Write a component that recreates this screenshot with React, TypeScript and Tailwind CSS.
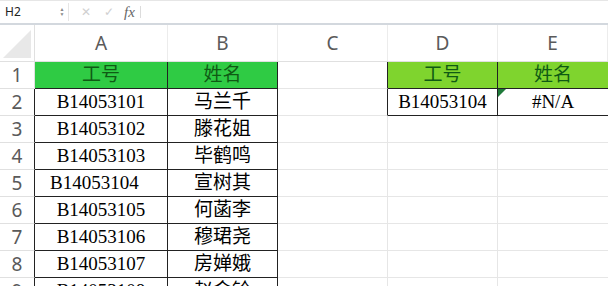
import React from "react";

const cols = ["A", "B", "C", "D", "E"];
const widths = [133, 110, 110, 110, 110];

const data: [string, string][] = [
  ["B14053101", "马兰千"],
  ["B14053102", "滕花姐"],
  ["B14053103", "毕鹤鸣"],
  ["B14053104", "宣树其"],
  ["B14053105", "何菡李"],
  ["B14053106", "穆珺尧"],
  ["B14053107", "房婵娥"],
  ["B14053108", "赵金铃"],
];

const serif = { fontFamily: '"Liberation Serif", "Noto Sans CJK SC", serif' };

export default function App() {
  const rows = [1, 2, 3, 4, 5, 6, 7, 8, 9];
  return (
    <div className="w-[608px] h-[286px] overflow-hidden bg-white" style={{ fontFamily: '"Noto Sans", "Liberation Sans", sans-serif' }}>
      {/* formula bar */}
      <div className="h-[25px] flex items-center border-t border-[#e6e6e6] border-b-[2px] border-b-[#d3d8de] bg-white">
        <div className="w-[58px] pl-[5px] text-[12px] text-[#222] leading-none">H2</div>
        <div className="w-[8px] flex flex-col items-center text-[5px] leading-[5px] text-[#888]">
          <span>▲</span>
          <span>▼</span>
        </div>
        <div className="w-px h-[18px] bg-[#e6e6e6] ml-[2px]" />
        <div className="w-[24px] text-center text-[#d0d0d0] text-[12px] ml-[5px]">✕</div>
        <div className="w-[22px] text-center text-[#d0d0d0] text-[12px]">✓</div>
        <div className="ml-[4px] text-[15px] italic text-[#666]" style={{ fontFamily: '"Liberation Serif", serif' }}>
          fx
        </div>
        <div className="w-px h-[12px] bg-[#dcdcdc] ml-[5px]" />
      </div>
      {/* column headers */}
      <div className="flex h-[37px] border-b border-[#e0e0e0]">
        <div className="w-[35px] h-full relative border-r border-[#e0e0e0] overflow-hidden">
          <div className="absolute right-[3px] bottom-[3px] w-0 h-0 border-l-[28px] border-l-transparent border-b-[28px] border-b-[#e8e8e8]" />
        </div>
        {cols.map((c, i) => (
          <div
            key={c}
            className="flex items-center justify-center text-[19px] text-[#5a5a5a] border-r border-[#ececec]"
            style={{ width: widths[i] }}
          >
            {c}
          </div>
        ))}
      </div>
      {/* rows */}
      {rows.map((r) => {
        const isHead = r === 1;
        const d = r >= 2 ? data[r - 2] : null;
        const inTable = r >= 1 && r <= 9;
        return (
          <div key={r} className="flex h-[27px]">
            <div
              className={`w-[35px] flex items-center justify-center text-[19px] text-[#5a5a5a] border-b border-[#e0e0e0] ${
                inTable && !isHead ? "border-r border-r-[#222]" : "border-r border-r-[#e0e0e0]"
              }`}
            >
              {r}
            </div>
            {/* A */}
            <div
              className={`w-[133px] flex items-center text-[19px] border-r border-b ${
                isHead
                  ? "bg-[#2fcb44] text-[#0f5a14] justify-center border-[#222]"
                  : "text-black border-[#222]"
              } ${r === 5 ? "pl-[15px]" : "justify-center"}`}
              style={serif}
            >
              {isHead ? "工号" : d?.[0]}
            </div>
            {/* B */}
            <div
              className={`w-[110px] flex items-center justify-center text-[19px] border-r border-b ${
                isHead ? "bg-[#2fcb44] text-[#0f5a14] border-[#222]" : "text-black border-[#222]"
              }`}
              style={serif}
            >
              {isHead ? "姓名" : d?.[1]}
            </div>
            {/* C */}
            <div
              className={`w-[110px] border-b border-[#e6e6e6] border-r ${r <= 2 ? "border-r-[#222]" : "border-r-[#e6e6e6]"}`}
            />
            {/* D */}
            <div
              className={`w-[110px] flex items-center justify-center text-[19px] border-r border-b ${
                r === 1
                  ? "bg-[#7fd42e] text-[#0f5a14] border-[#222]"
                  : r === 2
                  ? "text-black border-[#222]"
                  : "border-[#e6e6e6]"
              }`}
              style={serif}
            >
              {r === 1 ? "工号" : r === 2 ? "B14053104" : ""}
            </div>
            {/* E */}
            <div
              className={`w-[110px] relative flex items-center justify-center text-[19px] border-b ${
                r === 1 ? "bg-[#7fd42e] text-[#0f5a14] border-[#222]" : r === 2 ? "text-black border-[#222]" : "border-[#e6e6e6]"
              }`}
              style={serif}
            >
              {r === 2 && (
                <div className="absolute left-0 top-0 w-0 h-0 border-t-[8px] border-t-[#1f7a3a] border-r-[8px] border-r-transparent" />
              )}
              {r === 1 ? "姓名" : r === 2 ? "#N/A" : ""}
            </div>
          </div>
        );
      })}
    </div>
  );
}
